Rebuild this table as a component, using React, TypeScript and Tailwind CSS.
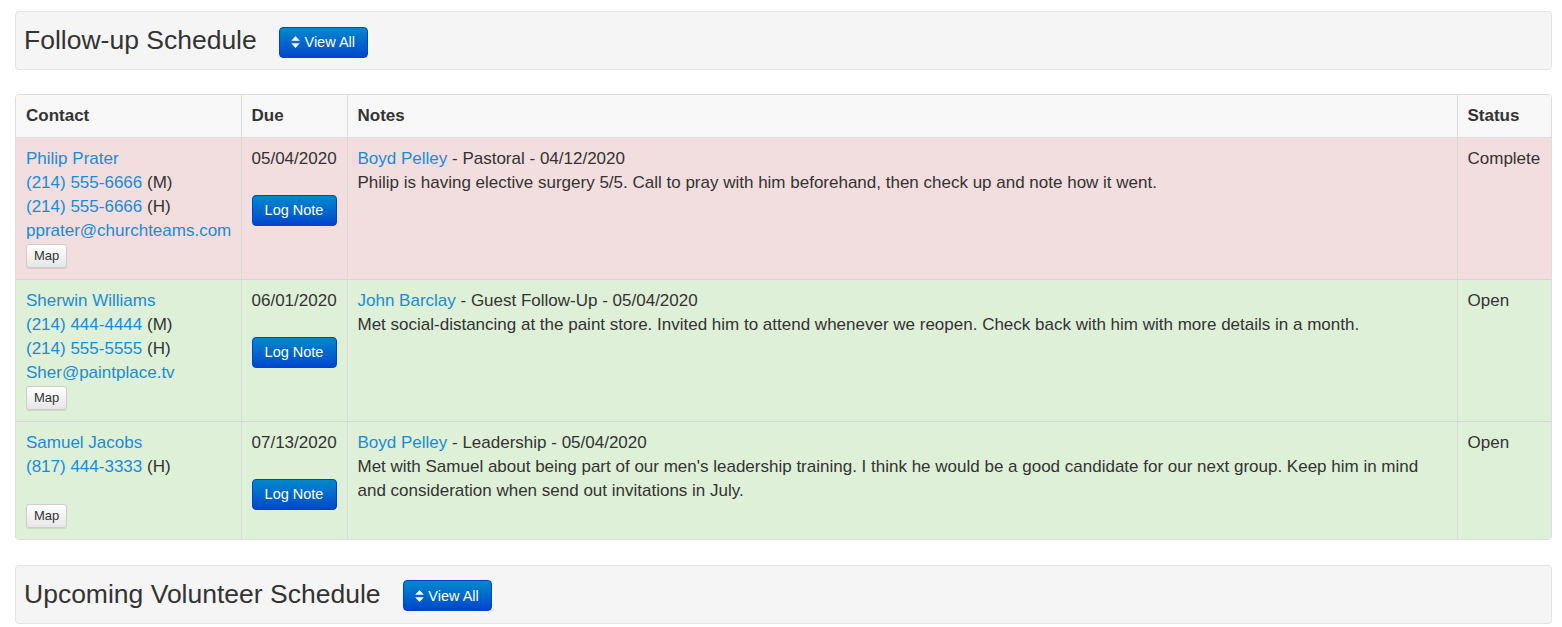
import React from "react";

type Phone = { number: string; kind: string };

interface FollowUp {
  name: string;
  phones: Phone[];
  email?: string;
  due: string;
  author: string;
  category: string;
  date: string;
  note: string;
  status: string;
  tone: "danger" | "success";
}

const rows: FollowUp[] = [
  {
    name: "Philip Prater",
    phones: [
      { number: "(214) 555-6666", kind: "M" },
      { number: "(214) 555-6666", kind: "H" },
    ],
    email: "pprater@churchteams.com",
    due: "05/04/2020",
    author: "Boyd Pelley",
    category: "Pastoral",
    date: "04/12/2020",
    note: "Philip is having elective surgery 5/5. Call to pray with him beforehand, then check up and note how it went.",
    status: "Complete",
    tone: "danger",
  },
  {
    name: "Sherwin Williams",
    phones: [
      { number: "(214) 444-4444", kind: "M" },
      { number: "(214) 555-5555", kind: "H" },
    ],
    email: "Sher@paintplace.tv",
    due: "06/01/2020",
    author: "John Barclay",
    category: "Guest Follow-Up",
    date: "05/04/2020",
    note: "Met social-distancing at the paint store. Invited him to attend whenever we reopen. Check back with him with more details in a month.",
    status: "Open",
    tone: "success",
  },
  {
    name: "Samuel Jacobs",
    phones: [{ number: "(817) 444-3333", kind: "H" }],
    due: "07/13/2020",
    author: "Boyd Pelley",
    category: "Leadership",
    date: "05/04/2020",
    note: "Met with Samuel about being part of our men's leadership training. I think he would be a good candidate for our next group. Keep him in mind and consideration when send out invitations in July.",
    status: "Open",
    tone: "success",
  },
];

const SortIcon = () => (
  <svg viewBox="0 0 10 14" className="mr-[4px] h-[12px] w-[9px] fill-white">
    <path d="M5 0 L10 5.5 H0 Z" />
    <path d="M5 14 L10 8.5 H0 Z" />
  </svg>
);

const PrimaryButton = ({ children, className = "" }: { children: React.ReactNode; className?: string }) => (
  <button
    type="button"
    className={`inline-flex items-center justify-center whitespace-nowrap rounded-[4px] border border-[#0044cc] bg-gradient-to-b from-[#0088cc] to-[#0044cc] text-white ${className}`}
  >
    {children}
  </button>
);

const PanelHeading = ({ title }: { title: string }) => (
  <div className="flex h-[59px] items-center rounded-[4px] border border-[#e3e3e3] bg-[#f5f5f5] pl-[8px]">
    <h3 className="text-[26.5px] leading-none text-[#333]">{title}</h3>
    <PrimaryButton className="ml-[22px] mt-[3px] h-[31px] w-[89px] text-[14.5px]">
      <SortIcon />
      View All
    </PrimaryButton>
  </div>
);

export default function App() {
  return (
    <div className="bg-white pl-[15px] pr-[10px] pt-[11px] font-['Liberation_Sans',Arial,sans-serif] text-[17px] leading-[24px] text-[#333]">
      <PanelHeading title="Follow-up Schedule" />

      <div className="mt-[24px] overflow-hidden rounded-[4px] border border-[#dddddd]">
        <table className="w-full table-fixed border-collapse">
          <colgroup>
            <col className="w-[225px]" />
            <col className="w-[106px]" />
            <col />
            <col className="w-[94px]" />
          </colgroup>
          <thead>
            <tr className="h-[42px] bg-[#f8f8f8] text-left">
              <th className="border-b border-[#dddddd] px-[10px] font-bold">Contact</th>
              <th className="border-b border-l border-[#dddddd] px-[10px] font-bold">Due</th>
              <th className="border-b border-l border-[#dddddd] px-[10px] font-bold">Notes</th>
              <th className="border-b border-l border-[#dddddd] px-[10px] font-bold">Status</th>
            </tr>
          </thead>
          <tbody>
            {rows.map((r, i) => (
              <tr
                key={r.name}
                className={`align-top ${r.tone === "danger" ? "bg-[#f2dede]" : "bg-[#dff0d8]"} ${i > 0 ? "border-t border-[#d6d6d6]" : ""}`}
              >
                <td className="px-[10px] pb-[11px] pt-[9px]">
                  <a className="block text-[#1a8bd6]">{r.name}</a>
                  {r.phones.map((p, j) => (
                    <div key={j}>
                      <a className="text-[#1a8bd6]">{p.number}</a> ({p.kind})
                    </div>
                  ))}
                  {r.email ? (
                    <a className="block whitespace-nowrap text-[#1a8bd6]">{r.email}</a>
                  ) : (
                    <div className="h-[24px]" />
                  )}
                  <button
                    type="button"
                    className="mt-[1px] block h-[24px] rounded-[3px] border border-[#cccccc] bg-gradient-to-b from-white to-[#e6e6e6] px-[7px] text-[13px] leading-[22px] text-[#333] shadow-[0_1px_1px_rgba(0,0,0,0.1)]"
                  >
                    Map
                  </button>
                </td>
                <td className="border-l border-[#d9d9d9] px-[10px] pt-[9px]">
                  <div className="whitespace-nowrap">{r.due}</div>
                  <PrimaryButton className="mt-[24px] h-[31px] w-[85px] text-[14.5px]">Log Note</PrimaryButton>
                </td>
                <td className="border-l border-[#d9d9d9] px-[10px] pt-[9px]">
                  <div>
                    <a className="text-[#1a8bd6]">{r.author}</a> - {r.category} - {r.date}
                  </div>
                  <div>{r.note}</div>
                </td>
                <td className="whitespace-nowrap border-l border-[#d9d9d9] px-[10px] pt-[9px]">{r.status}</td>
              </tr>
            ))}
          </tbody>
        </table>
      </div>

      <div className="mt-[25px]">
        <PanelHeading title="Upcoming Volunteer Schedule" />
      </div>
    </div>
  );
}
